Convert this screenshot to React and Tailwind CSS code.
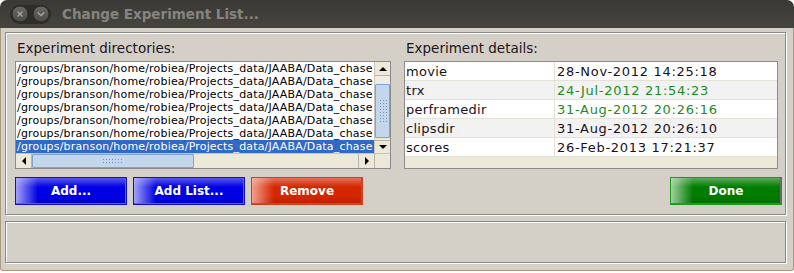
import React from "react";

const PATH = "/groups/branson/home/robiea/Projects_data/JAABA/Data_chase";
const DETAILS = [
  ["movie", "28-Nov-2012 14:25:18", false],
  ["trx", "24-Jul-2012 21:54:23", true],
  ["perframedir", "31-Aug-2012 20:26:16", true],
  ["clipsdir", "31-Aug-2012 20:26:10", false],
  ["scores", "26-Feb-2013 17:21:37", false],
];

function Tri({ dir }) {
  const pts = {
    up: "1,6 5,2 9,6",
    down: "1,2 5,6 9,2",
    left: "6,1 2,5 6,9",
    right: "2,1 6,5 2,9",
  }[dir];
  const vert = dir === "up" || dir === "down";
  return (
    <svg width={vert ? 10 : 8} height={vert ? 8 : 10} viewBox={vert ? "0 0 10 8" : "0 0 8 10"}>
      <polygon points={pts} fill="#000" />
    </svg>
  );
}

function Btn({ label, kind, className = "" }) {
  const styles = {
    blue: "bg-[#0000e4] border-[#1010c8] bg-[linear-gradient(to_right,rgba(190,190,255,0.85),rgba(255,255,255,0)_22px),linear-gradient(to_bottom,rgba(255,255,255,0.35),rgba(255,255,255,0)_9px,rgba(0,0,0,0)_70%,rgba(0,0,0,0.12))]",
    red: "bg-[#d42600] border-[#c8401c] bg-[linear-gradient(to_right,rgba(255,200,190,0.75),rgba(255,255,255,0)_22px),linear-gradient(to_bottom,rgba(255,255,255,0.35),rgba(255,255,255,0)_9px,rgba(0,0,0,0)_70%,rgba(0,0,0,0.12))]",
    green: "bg-[#007c00] border-[#1a9a1a] bg-[linear-gradient(to_right,rgba(200,230,200,0.8),rgba(255,255,255,0)_22px),linear-gradient(to_bottom,rgba(255,255,255,0.35),rgba(255,255,255,0)_9px,rgba(0,0,0,0)_70%,rgba(0,0,0,0.12))]",
  }[kind];
  return (
    <div
      className={`w-[112px] h-[28px] border flex items-center justify-center shadow-[inset_-1px_-1px_0_#6c6c6c] text-white font-bold text-[12px] font-['DejaVu_Sans',sans-serif] ${styles} ${className}`}
    >
      {label}
    </div>
  );
}

export default function App() {
  return (
    <div className="w-[794px] h-[273px] bg-white overflow-hidden font-['DejaVu_Sans',sans-serif]">
      {/* Title bar */}
      <div className="h-[28px] rounded-t-[7px] bg-[linear-gradient(to_bottom,#3a3935,#46443f)] flex items-center">
        <div className="ml-[10px] w-[41px] h-[19px] rounded-full bg-[#2e2d2a] flex items-center justify-between px-[1px]">
          <svg width="18" height="18" viewBox="0 0 18 18">
            <defs>
              <linearGradient id="wb" x1="0" y1="0" x2="0" y2="1">
                <stop offset="0" stopColor="#6b6a65" />
                <stop offset="1" stopColor="#4a4945" />
              </linearGradient>
            </defs>
            <circle cx="9" cy="9" r="8" fill="url(#wb)" stroke="#2a2927" />
            <path d="M6.5 6.5 L11.5 11.5 M11.5 6.5 L6.5 11.5" stroke="#a9a8a2" strokeWidth="1.3" />
          </svg>
          <svg width="18" height="18" viewBox="0 0 18 18">
            <circle cx="9" cy="9" r="8" fill="url(#wb)" stroke="#2a2927" />
            <path d="M5.8 7.5 L9 10.7 L12.2 7.5" stroke="#a9a8a2" strokeWidth="1.3" fill="none" />
          </svg>
        </div>
        <div className="ml-[11px] text-[13.5px] font-bold text-[#86847e] font-['DejaVu_Sans',sans-serif]">
          Change Experiment List...
        </div>
      </div>

      {/* Body */}
      <div className="h-[243px] bg-[#d4d0c8] border-x border-b border-[#a69b80] rounded-b-[3px] pl-[4px] pt-[4px]">
        {/* Panel 1 */}
        <div className="w-[781px] h-[183px] border border-[#8a8a8a] shadow-[1px_1px_0_#fff,inset_1px_1px_0_#fff] pl-[9px] pr-[3px] pt-[7px]">
          <div className="flex">
            {/* Left column */}
            <div className="w-[376px]">
              <div className="h-[16px] leading-[16px] text-[13.5px] text-[#1e141e] pl-[2px]">Experiment directories:</div>
              <div className="mt-[5px] w-[376px] h-[108px] border border-[#8c8c8c] bg-white flex flex-col">
                <div className="flex h-[91px]">
                  <div className="w-[358px] overflow-hidden">
                    {Array.from({ length: 7 }).map((_, i) => (
                      <div
                        key={i}
                        className={`h-[13px] leading-[13px] pl-[1px] whitespace-nowrap text-[11px] tracking-[0.18px] ${
                          i === 6 ? "bg-[#3169c6] text-white" : "text-black"
                        }`}
                      >
                        {PATH}
                      </div>
                    ))}
                  </div>
                  <div className="w-[16px] flex flex-col bg-[#ece9d8] border-l border-[#c8c4b8]">
                    <div className="h-[14px] flex items-center justify-center border-b border-[#b8b4a8]">
                      <Tri dir="up" />
                    </div>
                    <div className="h-[8px] bg-[#efede2]" />
                    <div className="flex-1 bg-[#c3d6ec] border border-[#7fa2cf] rounded-[1px] flex items-center justify-center">
                      <div className="w-[8px] h-[24px] bg-[radial-gradient(circle,#6f95c8_0.7px,transparent_0.9px)] bg-[length:3px_3px]" />
                    </div>
                    <div className="h-[2px]" />
                    <div className="h-[13px] flex items-center justify-center border-t border-[#b8b4a8]">
                      <Tri dir="down" />
                    </div>
                  </div>
                </div>
                <div className="flex flex-1 bg-[#ece9d8] border-t border-[#c8c4b8]">
                  <div className="w-[16px] flex items-center justify-center border-r border-[#b8b4a8]">
                    <Tri dir="left" />
                  </div>
                  <div className="w-[162px] bg-[#c3d6ec] border border-[#7fa2cf] rounded-[1px] flex items-center justify-center">
                    <div className="w-[22px] h-[7px] bg-[radial-gradient(circle,#6f95c8_0.7px,transparent_0.9px)] bg-[length:3px_3px]" />
                  </div>
                  <div className="flex-1" />
                  <div className="w-[16px] flex items-center justify-center border-l border-[#b8b4a8]">
                    <Tri dir="right" />
                  </div>
                  <div className="w-[16px] border-l border-[#b8b4a8]" />
                </div>
              </div>
            </div>

            {/* Right column */}
            <div className="ml-[13px] w-[374px]">
              <div className="h-[16px] leading-[16px] text-[13.5px] text-[#1e141e] pl-[2px]">Experiment details:</div>
              <div className="mt-[5px] w-[374px] h-[108px] border border-[#8c8c8c] bg-[#ece9d8]">
                {DETAILS.map(([name, date, green], i) => (
                  <div
                    key={name}
                    className={`flex h-[19px] leading-[19px] text-[13px] border-b border-[#e4e1d6] ${
                      i % 2 === 1 ? "bg-[#f2f2f2]" : "bg-white"
                    }`}
                  >
                    <div className="w-[150px] pl-[1px] border-r border-[#e4e1d6] text-[#1a101a] tracking-[0.3px]">{name}</div>
                    <div className={`pl-[2px] tracking-[0.7px] ${green ? "text-[#1f8a1f]" : "text-[#1a101a]"}`}>{date}</div>
                  </div>
                ))}
              </div>
            </div>
          </div>

          {/* Buttons */}
          <div className="mt-[8px] flex gap-[6px]">
            <Btn label="Add..." kind="blue" />
            <Btn label="Add List..." kind="blue" />
            <Btn label="Remove" kind="red" />
            <Btn label="Done" kind="green" className="ml-auto" />
          </div>
        </div>

        {/* Panel 2 */}
        <div className="mt-[6px] w-[781px] h-[42px] border border-[#8a8a8a] shadow-[1px_1px_0_#fff,inset_1px_1px_0_#fff]" />
      </div>
    </div>
  );
}
